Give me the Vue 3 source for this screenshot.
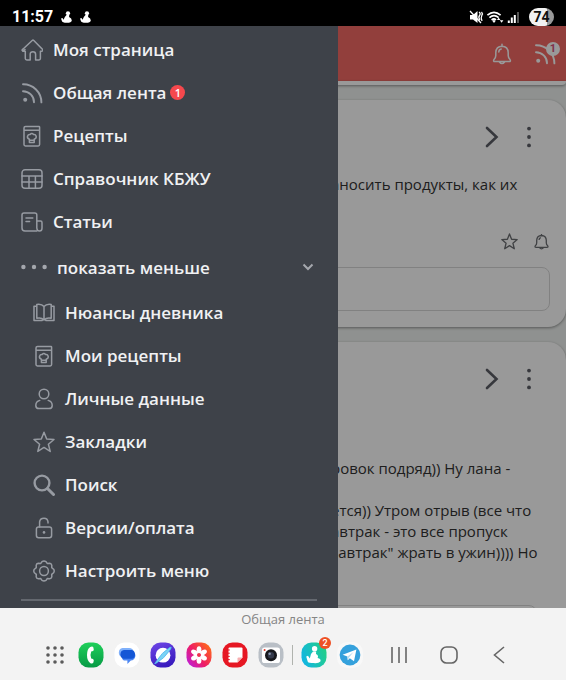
<script setup>
import { ref } from 'vue'

const expanded = ref(true)

const icons = {
  home: '<path d="M4 10.5 1.8 12.2 1 11 11.2 1.5Q12 .8 12.8 1.5L21.6 10.4Q22.4 12 20.6 12.2H19.4V19.6Q19.4 21 18 21H14.6V15.2Q14.6 12.8 11.9 12.8T9.2 15.2V21H5.8Q4.3 21 4.3 19.6V12.2H2.4Q.6 11.8 1.6 10.4"/>',
  feed: '<circle cx="4.2" cy="17.8" r="2" fill="currentColor" stroke="none"/><path d="M2 9.2A11 11 0 0 1 13 20.2M2 2.2A18.2 18.2 0 0 1 20.4 20.4" stroke-width="1.9"/>',
  recipe: '<path d="M4.5 1.5H18Q18.6 1.5 18.6 2.2V19.6Q18.6 21 17.2 21H4.4Q3 21 3 19.6V3Q3 1.5 4.5 1.5ZM3 5.2H18.6"/><path d="M8.4 14.3Q6 13.4 6.5 11.2 7.2 9.2 9.1 9.5 10.8 7.4 12.6 9.5 14.6 9.2 15.2 11.2 15.6 13.5 13.2 14.3V17.6H8.4ZM8.8 15.3H12.8"/>',
  table: '<rect x="1" y="1.8" width="20" height="18.4" rx="3"/><path d="M1 8H21M1 14H21M8 8V20M14.4 8V20"/>',
  article: '<path d="M15.8 20H4Q1 20 1 17V4Q1 2 3 2H13.8Q15.8 2 15.8 4V17Q16 20 18.4 20 21 20 21 17.2V11.4Q21 10 19.6 10H15.8M5 7H11.8M5 10.6H8.6"/>',
  book: '<path d="M11 4.5Q8.6 1.6 3.8 2.4V16.2Q8.5 15.2 11 18 13.6 15.2 18.2 16.2V2.4Q13.4 1.6 11 4.5V18M3.6 4.2H1V18.6H9.2M18.4 4.2H21V18.6H12.8"/>',
  user: '<circle cx="11" cy="6" r="4.8"/><path d="M6.8 12.4Q2.8 13.6 2.8 17.4 2.8 20.6 6 20.6H16Q19.2 20.6 19.2 17.4 19.2 13.6 15.2 12.4"/>',
  star: '<path d="m11 1.2 2.7 6.9 7.3.4-5.6 4.7 1.8 7.2-6.2-4-6.2 4 1.8-7.2L1 8.5l7.3-.4Z"/>',
  search: '<circle cx="9" cy="9" r="7.4" stroke-width="2.4"/><path d="m14.5 14.5 6 6" stroke-width="3"/>',
  lock: '<rect x="3.4" y="10" width="15.2" height="10.8" rx="2.2"/><path d="M6.6 10V4.8Q7 1.2 11 1.2 14.6 1.2 15 4.8V6"/><circle cx="11" cy="15.4" r="1.3" fill="currentColor" stroke="none"/>',
  gear: '<circle cx="11" cy="11" r="4.4"/><path d="M9 1.6Q11 .4 13 1.6L14.2 3.4 16.8 3.2Q18.6 3.6 18.8 5.4L18.7 7.6 20.6 9.2Q21.8 11 20.6 12.8L18.7 14.4 18.8 16.8Q18.4 18.6 16.6 18.8L14.2 18.6 13 20.4Q11 21.6 9 20.4L7.8 18.6 5.4 18.8Q3.4 18.6 3.2 16.8L3.3 14.4 1.4 12.8Q.2 11 1.4 9.2L3.3 7.6 3.2 5.4Q3.4 3.4 5.2 3.2L7.8 3.4Z"/>',
  bell: '<path d="M3 16.5Q4.8 14.8 4.8 12.5V9.5Q5 3.4 11 3.2 17 3.4 17.2 9.5V12.5Q17.2 14.8 19 16.5 20.2 18.6 18 18.6H4Q1.8 18.6 3 16.5ZM11 3V1.2M8.4 19Q11 22.2 13.6 19M7.8 9Q7.8 6.6 10.2 6"/>'
}

const mainItems = [
  { icon: 'home', label: 'Моя страница' },
  { icon: 'feed', label: 'Общая лента', count: 1 },
  { icon: 'recipe', label: 'Рецепты' },
  { icon: 'table', label: 'Справочник КБЖУ' },
  { icon: 'article', label: 'Статьи' }
]

const moreItems = [
  { icon: 'book', label: 'Нюансы дневника' },
  { icon: 'recipe', label: 'Мои рецепты' },
  { icon: 'user', label: 'Личные данные' },
  { icon: 'star', label: 'Закладки' },
  { icon: 'search', label: 'Поиск' },
  { icon: 'lock', label: 'Версии/оплата' },
  { icon: 'gear', label: 'Настроить меню' }
]

const posts = [
  { id: 1, lines: ['аносить продукты, как их'] },
  {
    id: 2,
    lines: ['ровок подряд)) Ну лана -', '', 'ется)) Утром отрыв (все что', 'автрак - это все пропуск', 'завтрак" жрать в ужин)))) Но']
  }
]
</script>

<template>
  <div class="screen">
    <header class="status">
      <time>11:57</time>
      <svg v-for="n in 2" :key="n" class="figure" viewBox="0 0 12 13" aria-hidden="true">
        <circle cx="7.6" cy="2.4" r="2.3" />
        <path d="M6 4.4H9L8.8 6.6Q11.8 8 11.8 10.2 11.4 12.8 6.4 12.8 1.2 12.8 1 10.8L0 8.2 1.6 7.6 2.8 9.4 4.2 6.4Z" />
      </svg>
      <svg class="sys" viewBox="0 0 52 16" aria-hidden="true">
        <path d="M1 6H4L8.5 2V14L4 10.5H1Z" fill="#fff" />
        <path d="M1 2 12 14M10 3Q12 4.5 10.5 6.5T11 11M12.5 3Q14 4.5 12.8 6.5T13 12" stroke="#fff" stroke-width="1.3" fill="none" />
        <path d="M18.4 6.2Q25 .4 31.6 6.2M20.4 8.6Q25 4.6 29.6 8.6M22.6 11Q25 9 27 11" stroke="#fff" stroke-width="1.7" fill="none" />
        <path d="M23.4 12 25 10.8 26.6 12 25 14ZM29.6 8.4 31.4 11H28ZM32.6 13.8 30.8 11.3H34.4Z" fill="#fff" />
        <path d="M39.8 14V11.5M42.8 14V8.6M45.8 14V6" stroke="#fff" stroke-width="2" />
        <path d="M49 14V3" stroke="#555" stroke-width="2" />
      </svg>
      <span class="battery">74</span>
    </header>

    <main class="app">
      <div class="topbar">
        <button class="plain" aria-label="Уведомления">
          <svg class="icon" viewBox="0 0 22 22" v-html="icons.bell"></svg>
        </button>
        <button class="plain feed-btn" aria-label="Лента">
          <svg class="icon" viewBox="0 0 22 22" v-html="icons.feed"></svg>
          <span class="bubble">1</span>
        </button>
      </div>

      <div class="feed">
        <div class="card tail"></div>
        <article v-for="post in posts" :key="post.id" class="card" :class="{ long: post.lines.length > 1 }">
          <div class="card-head">
            <button class="plain" aria-label="Открыть">
              <svg class="arrow" viewBox="0 0 14 22"><path d="m2 2 9.5 9L2 20" /></svg>
            </button>
            <button class="plain" aria-label="Ещё">
              <svg class="kebab" viewBox="0 0 6 22"><circle cx="3" cy="2.6" r="1.9" /><circle cx="3" cy="11" r="1.9" /><circle cx="3" cy="19.4" r="1.9" /></svg>
            </button>
          </div>
          <div class="text">
            <p v-for="(line, i) in post.lines" :key="i">{{ line }}</p>
          </div>
          <div v-if="post.id === 1" class="actions">
            <button class="plain" aria-label="В закладки">
              <svg class="small" viewBox="0 0 22 22" v-html="icons.star"></svg>
            </button>
            <button class="plain" aria-label="Подписаться">
              <svg class="small" viewBox="0 0 22 22" v-html="icons.bell"></svg>
            </button>
          </div>
          <input v-if="post.id === 1" class="comment" type="text" aria-label="Комментарий" />
          <div v-else class="quote"></div>
        </article>
      </div>

      <div class="shade"></div>

      <nav class="drawer">
        <a v-for="item in mainItems" :key="item.label" class="item" href="#">
          <svg class="icon" viewBox="0 0 22 22" v-html="icons[item.icon]"></svg>
          <span>{{ item.label }}</span>
          <span v-if="item.count" class="count">{{ item.count }}</span>
        </a>
        <button class="toggle" :aria-expanded="expanded" @click="expanded = !expanded">
          <svg class="dots" viewBox="0 0 26 6"><circle cx="2.4" cy="3" r="2.2" /><circle cx="13" cy="3" r="2.2" /><circle cx="23.6" cy="3" r="2.2" /></svg>
          <span>показать меньше</span>
          <svg class="caret" viewBox="0 0 12 8"><path d="m1.5 1.5 4.5 4.5 4.5-4.5" /></svg>
        </button>
        <div v-if="expanded" class="nested">
          <a v-for="item in moreItems" :key="item.label" class="item" href="#">
            <svg class="icon" viewBox="0 0 22 22" v-html="icons[item.icon]"></svg>
            <span>{{ item.label }}</span>
          </a>
        </div>
        <hr />
      </nav>
    </main>

    <footer class="dock">
      <p class="caption">Общая лента</p>
      <div class="tray">
        <div class="apps">
          <button class="plain" aria-label="Приложения">
            <svg class="app-icon" viewBox="0 0 26 26">
              <g fill="#5b5b5b"><template v-for="r in 3" :key="r"><circle v-for="c in 3" :key="c" :cx="c * 7 - 1" :cy="r * 7 - 1" r="1.8" /></template></g>
            </svg>
          </button>
          <button class="plain" aria-label="Телефон">
            <svg class="app-icon" viewBox="0 0 26 26">
              <defs><linearGradient id="g-phone" x2="0" y2="1"><stop stop-color="#1fd05a" /><stop offset="1" stop-color="#079a45" /></linearGradient></defs>
              <rect x=".5" y=".5" width="25" height="25" rx="10" fill="url(#g-phone)" />
              <path d="M12.2 5Q14.8 4 15.4 5.6L15.8 8Q15.6 9.4 13.2 9.6 11.8 13 13.2 16.6 15.6 16.8 15.8 18.2L15.4 20.6Q14.6 22 12.4 21.2 9 18.8 9 13T12.2 5Z" fill="#fff" />
            </svg>
          </button>
          <button class="plain" aria-label="Сообщения">
            <svg class="app-icon" viewBox="0 0 26 26">
              <rect x=".5" y=".5" width="25" height="25" rx="10" fill="#fff" />
              <path d="M8.5 6H15Q19 6 19.6 9.6V15H8.4Q5 14.6 4.8 10.8 5 6.4 8.5 6Z" fill="#7fb0fb" />
              <path d="M12 10H19Q21.6 11 21.4 14 20.6 18.4 16.8 18.6L13.4 22V18.6H10Q8 18 8 14Z" fill="#4b86f3" />
              <path d="M10 8H17.6Q21 8.6 21 12.4T17.4 16.8H10Q6.6 16.4 6.4 12.4 6.6 8.4 10 8Z" fill="#1557d6" />
            </svg>
          </button>
          <button class="plain" aria-label="Браузер">
            <svg class="app-icon" viewBox="0 0 26 26">
              <defs><linearGradient id="g-web" x2=".4" y2="1"><stop stop-color="#7048e8" /><stop offset="1" stop-color="#3a1cbf" /></linearGradient></defs>
              <rect x=".5" y=".5" width="25" height="25" rx="10" fill="url(#g-web)" />
              <circle cx="13" cy="13.2" r="7.4" fill="#fff" />
              <path d="M5.5 20.4Q3.8 22.4 5.8 21.4 14 17 20.4 7.6 22.2 4.4 20 5.2 12 10 5.5 20.4Z" fill="#7ad3f5" stroke="#4fb4ee" stroke-width=".8" />
            </svg>
          </button>
          <button class="plain" aria-label="Галерея">
            <svg class="app-icon" viewBox="0 0 26 26">
              <defs><linearGradient id="g-pic" x1="0" y1="1" x2="1" y2=".2"><stop stop-color="#b41ff0" /><stop offset=".5" stop-color="#ee1d64" /><stop offset="1" stop-color="#ff6a1a" /></linearGradient></defs>
              <rect x=".5" y=".5" width="25" height="25" rx="10" fill="url(#g-pic)" />
              <g fill="#fff"><ellipse v-for="a in 6" :key="a" cx="13" cy="7.8" rx="2.4" ry="3.6" :transform="`rotate(${a * 60} 13 13)`" /></g>
              <circle cx="13" cy="13" r="1.8" fill="#f0324f" />
            </svg>
          </button>
          <button class="plain" aria-label="Заметки">
            <svg class="app-icon" viewBox="0 0 26 26">
              <rect x=".5" y=".5" width="25" height="25" rx="10" fill="#e61723" />
              <path d="M7.5 5.5H19.5Q20.5 5.5 20.5 6.5V15.5L15.5 20.5H7.5Q6.5 20.5 6.5 19.5V6.5Q6.5 5.5 7.5 5.5Z" fill="#fff" />
              <path d="M15.5 20.5V16.5Q15.5 15.5 16.5 15.5H20.5Z" fill="#f7aeb0" />
              <path d="M5.8 8H7.8M5.8 11.2H7.8M5.8 14.4H7.8M5.8 17.6H7.8" stroke="#e61723" stroke-width="1" />
            </svg>
          </button>
          <button class="plain" aria-label="Камера">
            <svg class="app-icon" viewBox="0 0 26 26">
              <rect x=".5" y=".5" width="25" height="25" rx="10" fill="#b9bfc6" />
              <rect x="4" y="5.4" width="18" height="15.6" rx="2.6" fill="#fff" />
              <circle cx="13" cy="13.2" r="6" fill="#17181c" />
              <circle cx="13" cy="13.2" r="3.2" fill="#33394a" />
              <circle cx="11.6" cy="11.8" r="1.2" fill="#8e9bb5" />
              <circle cx="6.6" cy="8" r="1" fill="#e43a2e" />
            </svg>
          </button>
        </div>
        <span class="sep"></span>
        <div class="apps">
          <button class="plain badged" aria-label="Дневник">
            <svg class="app-icon" viewBox="0 0 26 26">
              <defs><linearGradient id="g-diary" x1="0" y1=".7" x2="1" y2=".3"><stop stop-color="#12b5e5" /><stop offset="1" stop-color="#22cf86" /></linearGradient></defs>
              <rect x=".5" y=".5" width="25" height="25" rx="10" fill="url(#g-diary)" />
              <g fill="#fff">
                <circle cx="13.6" cy="6.8" r="2.7" />
                <path d="M12 9.4H15.2L15 12Q18 13.4 16.6 16 20.4 16.6 19.4 19.4 17.6 21.6 12.4 21 6.4 21.6 6.4 18.6L5.2 14.4 7 13.8 8.8 16.6 10 12Z" />
              </g>
            </svg>
            <span class="app-count">2</span>
          </button>
          <button class="plain" aria-label="Телеграм">
            <svg class="app-icon" viewBox="0 0 26 26">
              <rect width="26" height="26" rx="10" fill="#f8f8f8" />
              <circle cx="13" cy="13" r="10.4" fill="#35a1dc" />
              <path d="M5.6 12.8 19.4 7.4 17 19.2 12.8 16.2 10.8 18.2 10.4 14.6Z" fill="#fff" />
              <path d="m10.4 14.6 6.2-4.6-4.6 5.4-1.2 2.8Z" fill="#b9dcf0" />
            </svg>
          </button>
        </div>
        <div class="keys">
          <button class="plain" aria-label="Недавние">
            <svg class="app-icon" viewBox="0 0 26 26"><path class="key" d="M6 5V21M13 5V21M20 5V21" /></svg>
          </button>
          <button class="plain" aria-label="Домой">
            <svg class="app-icon" viewBox="0 0 26 26"><rect class="key" x="5" y="5" width="16" height="16" rx="5.5" /></svg>
          </button>
          <button class="plain" aria-label="Назад">
            <svg class="app-icon" viewBox="0 0 26 26"><path class="key" d="M18 5 8.5 13 18 21" /></svg>
          </button>
        </div>
      </div>
    </footer>
  </div>
</template>

<style>
body {
  background: #f3f3f3;
}
</style>

<style scoped>
.screen {
  display: flex;
  flex-direction: column;
  height: 100vh;
  font-family: "Open Sans", "Noto Sans", sans-serif;
}

.plain {
  display: block;
  padding: 0;
  border: 0;
  background: none;
  color: inherit;
}

svg {
  display: block;
}

.status {
  display: flex;
  align-items: center;
  gap: 8px;
  height: 26px;
  padding: 7px 12px 0;
  box-sizing: border-box;
  background: #000;
  color: #fff;
  font: 700 16px/19px Roboto, sans-serif;
}

.figure {
  width: 11px;
  height: 12px;
  fill: #fff;
}

.sys {
  width: 52px;
  height: 16px;
  margin-left: auto;
}

.battery {
  width: 25px;
  border-radius: 9px;
  background: linear-gradient(90deg, #f2f2f2 74%, #999 74%);
  color: #111;
  font-size: 14px;
  line-height: 18px;
  text-align: center;
}

.app {
  --drawer: 338px;
  position: relative;
  flex: 1;
  min-height: 0;
  overflow: hidden;
  background: #eff2f0;
}

.topbar {
  display: flex;
  justify-content: flex-end;
  align-items: center;
  gap: 21px;
  height: 55px;
  padding-right: 10px;
  box-sizing: border-box;
  background: #f36a65;
  color: #fff;
}

.icon {
  width: 22px;
  height: 22px;
  fill: none;
  stroke: currentColor;
  stroke-width: 1.5;
  stroke-linejoin: round;
  stroke-linecap: round;
}

.feed-btn,
.badged {
  position: relative;
}

.bubble {
  position: absolute;
  top: -1px;
  right: -4px;
  width: 14px;
  border-radius: 7px;
  background: #fff;
  color: #d8507c;
  font: 700 11px/14px Roboto, sans-serif;
  text-align: center;
}

.feed {
  display: flex;
  flex-direction: column;
  gap: 15px;
}

.card {
  flex: none;
  padding: 0 16px 16px;
  border-radius: 18px;
  background: #fff;
  box-shadow: 0 1px 3px rgba(0, 0, 0, 0.4);
}

.tail {
  height: 4px;
  padding: 0;
  border-radius: 0 0 18px 18px;
}

.card-head {
  display: flex;
  justify-content: flex-end;
  align-items: center;
  gap: 27px;
  height: 74px;
  padding-right: 18px;
}

.arrow {
  width: 14px;
  height: 22px;
  fill: none;
  stroke: #5c5e66;
  stroke-width: 2.6;
  stroke-linecap: round;
}

.kebab {
  width: 6px;
  height: 22px;
  fill: #5c5e66;
}

.text {
  padding-left: calc(var(--drawer) - 23px);
  color: #333;
  font-size: 15px;
  line-height: 21px;
  white-space: nowrap;
}

.text p {
  min-height: 21px;
  margin: 0;
}

.long .text {
  padding-top: 42px;
  padding-bottom: 42px;
}

.actions {
  display: flex;
  justify-content: flex-end;
  gap: 15px;
  padding: 38px 0 17px;
  color: #6c6e72;
}

.small {
  width: 17px;
  height: 17px;
  fill: none;
  stroke: currentColor;
  stroke-width: 1.7;
  stroke-linejoin: round;
}

.comment {
  display: block;
  width: 100%;
  height: 44px;
  box-sizing: border-box;
  border: 1px solid #d8d8d8;
  border-radius: 8px;
  background: #fff;
}

.quote {
  height: 60px;
  margin-right: 13px;
  border: 1px solid #d8d8d8;
  border-radius: 8px;
}

.shade {
  position: absolute;
  inset: 0;
  background: rgba(0, 0, 0, 0.4);
}

.drawer {
  position: absolute;
  top: 0;
  bottom: 0;
  left: 0;
  width: var(--drawer);
  padding: 2px 21px 0;
  box-sizing: border-box;
  background: #3e4249;
  color: #f0f1f3;
  font-size: 17px;
  font-weight: 600;
}

.item {
  display: flex;
  align-items: center;
  gap: 10px;
  height: 43px;
  color: inherit;
  text-decoration: none;
}

.item .icon {
  color: #979ba2;
}

.count {
  width: 15px;
  margin-left: -6px;
  border-radius: 8px;
  background: #f5484d;
  color: #fff;
  font-size: 11px;
  line-height: 15px;
  text-align: center;
}

.toggle {
  display: flex;
  align-items: center;
  gap: 10px;
  width: 100%;
  height: 48px;
  padding: 0;
  border: 0;
  background: none;
  color: inherit;
  font: inherit;
}

.dots {
  width: 26px;
  height: 6px;
  fill: #a4a7ad;
}

.caret {
  width: 12px;
  height: 8px;
  margin-right: 3px;
  margin-left: auto;
  fill: none;
  stroke: #a4a7ad;
  stroke-width: 2;
}

.nested {
  padding-left: 12px;
}

hr {
  height: 2px;
  margin: 7px 0 0;
  border: 0;
  background: #64686f;
}

.dock {
  height: 72px;
  background: #f3f3f3;
}

.caption {
  margin: 0;
  padding: 2px 0 13px;
  color: #858585;
  font-size: 13px;
  line-height: 19px;
  text-align: center;
}

.tray {
  display: flex;
  align-items: center;
  padding: 0 42px;
}

.apps {
  display: flex;
  gap: 10px;
}

.app-icon {
  width: 26px;
  height: 26px;
}

.sep {
  width: 1px;
  height: 20px;
  margin: 0 8px;
  background: #b0b3ae;
}

.app-count {
  position: absolute;
  top: -5px;
  right: -4px;
  width: 12px;
  border-radius: 6px;
  background: #ee5024;
  color: #fff;
  font: 500 9px/12px Roboto, sans-serif;
  text-align: center;
}

.keys {
  display: flex;
  gap: 24px;
  margin-left: 23px;
}

.key {
  fill: none;
  stroke: #666;
  stroke-width: 1.6;
}
</style>
